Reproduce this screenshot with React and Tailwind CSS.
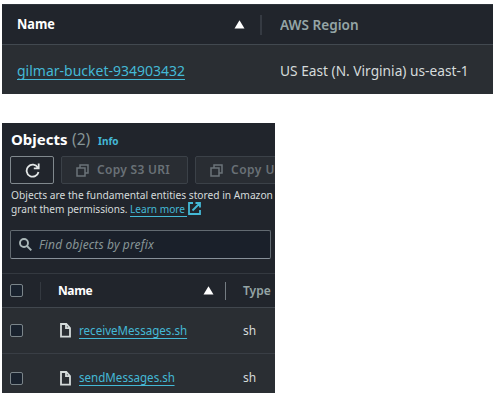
import React from "react";

function Text({ className = "", children }) {
  return <span className={`block shrink-0 whitespace-nowrap ${className}`}>{children}</span>;
}

function SortArrow() {
  return (
    <svg className="block h-[9px] w-[11px] shrink-0" viewBox="0 0 11 9" fill="#fff">
      <path d="M5.5 0.3 10.5 8.6H.5Z" />
    </svg>
  );
}

function Checkbox() {
  return <span className="block h-[13px] w-[13px] shrink-0 rounded-[2px] border border-[#7b858a] bg-[#19222e]" />;
}

function CopyIcon() {
  return (
    <svg className="block h-[13px] w-[13px] shrink-0" viewBox="0 0 13 13" fill="none" stroke="#6b7379" strokeWidth="1.5">
      <path d="M1 4H9V12H1ZM4 4V1H12V9H9" />
    </svg>
  );
}

function FileIcon() {
  return (
    <svg className="block h-[15px] w-[11px] shrink-0" viewBox="0 0 11 15" fill="none" stroke="#d5dbdb" strokeWidth="1.8">
      <path d="M6.3 1H1V13.6H10V5ZM6 1V5.2H10" />
    </svg>
  );
}

function BucketTable() {
  return (
    <section className="flex h-[90px] w-[491px] flex-col overflow-hidden bg-[#2a2e33]">
      <div className="flex h-[41px] items-center border-t border-b border-t-[#2e343b] border-b-[#424950] bg-[#21252c] pl-[15px]">
        <Text className="w-[217px] origin-left scale-x-[0.94] text-[13.5px] font-bold text-white">Name</Text>
        <SortArrow />
        <span className="ml-[15px] block h-5 w-[2px] bg-[#353a42]" />
        <Text className="ml-[18px] origin-left scale-x-[0.97] text-[14px] font-semibold text-[#95a5a6]">AWS Region</Text>
      </div>
      <div className="flex h-[49px] items-center pt-[2px] pl-[15px]">
        <div className="w-[263px]">
          <Text className="w-fit border-b border-[#44b9d6] text-[14px] leading-[17px] text-[#44b9d6]">gilmar-bucket-934903432</Text>
        </div>
        <Text className="origin-left scale-x-[0.98] text-[14px] leading-[17px] text-[#d5dbdb]">US East (N. Virginia) us-east-1</Text>
      </div>
    </section>
  );
}

function CopyButton({ label, className }) {
  return (
    <button className={`flex h-7 shrink-0 items-center rounded-[2px] border border-[#3b4148] bg-[#292d33] pl-[14px] ${className}`}>
      <CopyIcon />
      <Text className="ml-[8px] text-[12px] font-semibold text-[#697177]">{label}</Text>
    </button>
  );
}

function ObjectRow({ name, height }) {
  return (
    <div className={`flex shrink-0 items-center bg-[#2a2e33] pl-2 ${height}`}>
      <Checkbox />
      <span className="ml-[37px]"><FileIcon /></span>
      <div className="ml-[8px] w-[164px]">
        <Text className="w-fit origin-left scale-x-[0.965] border-b border-[#44b9d6] text-[12px] leading-[15px] text-[#44b9d6]">{name}</Text>
      </div>
      <Text className="text-[12px] text-[#d5dbdb]">sh</Text>
    </div>
  );
}

function ObjectsPanel() {
  return (
    <section className="mt-[29px] flex h-[270px] w-[273px] flex-col overflow-hidden bg-[#21252c]">
      <div className="flex h-[33px] shrink-0 items-baseline pt-[5px] pl-[9px]">
        <Text className="w-[61px] text-[15px] leading-[22px] font-bold text-white">Objects</Text>
        <Text className="w-[26px] text-[15.5px] leading-[22px] text-[#879596]">(2)</Text>
        <Text className="text-[10px] font-bold text-[#44b9d6]">Info</Text>
      </div>
      <div className="flex h-7 shrink-0 gap-[7px] pl-2">
        <button className="flex h-7 w-11 shrink-0 items-center justify-center rounded-[2px] border border-[#80888d]">
          <svg className="h-[15px] w-[15px]" viewBox="0 0 15 15" fill="none" stroke="#e3e7e7" strokeWidth="1.8">
            <path d="M13.5 9A6 6 0 1 1 12.8 4.6M13.7 0.5V5.3H8.8" />
          </svg>
        </button>
        <CopyButton label="Copy S3 URI" className="w-[127px] tracking-[0.3px]" />
        <CopyButton label="Copy URL" className="w-[110px] tracking-[0.5px]" />
      </div>
      <div className="mt-[4px] flex h-[42px] shrink-0 flex-col pl-[9px] text-[11px] leading-[14px] text-[#d5dbdb]">
        <Text className="w-fit origin-left scale-x-[0.928]">Objects are the fundamental entities stored in Amazon</Text>
        <div className="flex">
          <div className="w-[119px]">
            <Text className="w-fit origin-left scale-x-[0.92]">grant them permissions.</Text>
          </div>
          <div className="h-[15px] w-[57px] border-b border-[#44b9d6]">
            <Text className="w-fit origin-left scale-x-[0.92] text-[#44b9d6]">Learn more</Text>
          </div>
          <svg className="ml-[1px] block h-[13px] w-[13px]" viewBox="0 0 13 13" fill="none" stroke="#44b9d6" strokeWidth="1.8">
            <path d="M5 1H1V12H12V8M7.5 1H12V5.5M12 1 4.5 8.5" />
          </svg>
        </div>
      </div>
      <div className="ml-2 flex h-[29px] w-[261px] shrink-0 items-center rounded-[2px] border border-[#626a71] border-b-[#879099] bg-[#1a202a] pl-[8px]">
        <svg className="h-[13px] w-[13px]" viewBox="0 0 13 13" fill="none" stroke="#aab7b8" strokeWidth="1.9">
          <circle cx="5" cy="5" r="4" /><path d="M8 8 12.3 12.3" />
        </svg>
        <Text className="ml-[7px] text-[12px] tracking-[0.13px] text-[#879596] italic">Find objects by prefix</Text>
      </div>
      <div className="mt-[14px] flex h-[35px] shrink-0 items-center border-t border-b border-t-[#343940] border-b-[#41474e] pl-2">
        <Checkbox />
        <span className="ml-[17px] block h-[18px] w-px bg-[#343940]" />
        <Text className="ml-[17px] w-[145px] text-[12px] font-bold tracking-[-0.4px] text-white">Name</Text>
        <SortArrow />
        <span className="ml-[11px] block h-[18px] w-px bg-[#747c82]" />
        <Text className="ml-[17px] text-[12px] font-semibold text-[#95a5a6]">Type</Text>
      </div>
      <ObjectRow name="receiveMessages.sh" height="h-[46px] border-b border-[#393e45]" />
      <ObjectRow name="sendMessages.sh" height="h-[48px]" />
    </section>
  );
}

export default function App() {
  return (
    <main className="h-[401px] w-[495px] overflow-hidden bg-white pt-1 pl-[2px] font-['Noto_Sans',sans-serif]">
      <BucketTable />
      <ObjectsPanel />
    </main>
  );
}
